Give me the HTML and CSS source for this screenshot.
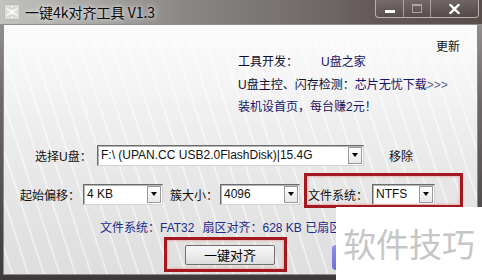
FILE: index.html
```html
<!DOCTYPE html>
<html lang="zh-CN">
<head>
<meta charset="utf-8">
<title>一键4k对齐工具 V1.3</title>
<link rel="stylesheet" href="styles.css">
</head>
<body>
<div class="window">
  <div class="titlebar">
    <svg class="app-icon" width="16" height="16" viewBox="0 0 16 16">
      <rect x="0.5" y="0.5" width="15" height="15" rx="1" fill="#d9dcd8" stroke="#b8bcb6"/>
      <g stroke="#ffffff" stroke-width="1.3" stroke-linecap="round">
        <line x1="8" y1="2.5" x2="8" y2="13.5"/>
        <line x1="3" y1="5" x2="13" y2="11"/>
        <line x1="3" y1="11" x2="13" y2="5"/>
      </g>
      <g stroke="#c2c6bf" stroke-width="0.8">
        <line x1="6" y1="3" x2="8" y2="5"/>
        <line x1="10" y1="3" x2="8" y2="5"/>
        <line x1="6" y1="13" x2="8" y2="11"/>
        <line x1="10" y1="13" x2="8" y2="11"/>
      </g>
    </svg>
    <span class="title">一键4k对齐工具 V1.3</span>
    <div class="controls">
      <span class="ctl ctl-min"><span class="min-bar"></span></span>
      <span class="ctl ctl-max"><span class="max-box"></span></span>
      <span class="ctl ctl-close">
        <svg width="11" height="10" viewBox="0 0 11 10">
          <path d="M1.5 1 L9.5 9 M9.5 1 L1.5 9" stroke="#ffffff" stroke-width="2.4" stroke-linecap="square"/>
        </svg>
      </span>
    </div>
  </div>
  <div class="frame">
    <div class="client">
      <div class="update">更新</div>
      <div class="info">
        <div class="info-line"><span class="info-key">工具开发：</span><span class="link">U盘之家</span></div>
        <div class="info-line"><span>U盘主控、闪存检测：</span><span class="link">芯片无忧下载</span><span class="more">&gt;&gt;&gt;</span></div>
        <div class="info-line"><span class="link">装机设首页，每台赚2元！</span></div>
      </div>
      <div class="row row-disk">
        <span class="label label-disk">选择U盘：</span>
        <div class="combo combo-disk"><span class="val">F:\ (UPAN.CC USB2.0FlashDisk)|15.4G</span><span class="arrow"><i></i></span></div>
        <span class="remove">移除</span>
      </div>
      <div class="row row-opts">
        <span class="label label-offset">起始偏移：</span>
        <div class="combo combo-small"><span class="val">4 KB</span><span class="arrow"><i></i></span></div>
        <span class="label label-cluster">簇大小：</span>
        <div class="combo combo-small"><span class="val">4096</span><span class="arrow"><i></i></span></div>
        <span class="label label-fs">文件系统：</span>
        <div class="combo combo-fs"><span class="val">NTFS</span><span class="arrow"><i></i></span></div>
      </div>
      <div class="status">文件系统：FAT32<span class="sep"></span>扇区对齐：628 KB 已扇区</div>
      <div class="row row-action">
        <div class="mark-btn"><button class="action">一键对齐</button></div>
        <div class="blue-btn"></div>
      </div>
      <div class="mark mark-fs"></div>
    </div>
  </div>
  <div class="watermark">软件技巧</div>
</div>
</body>
</html>
```
FILE: styles.css
```css
html, body {
  margin: 0;
  padding: 0;
}
body {
  width: 482px;
  height: 280px;
  overflow: hidden;
  font-family: "Liberation Sans", "Noto Sans CJK SC", sans-serif;
  font-size: 12px;
  color: #000;
}
.window {
  position: relative;
  width: 482px;
  height: 280px;
  display: flex;
  flex-direction: column;
  background: linear-gradient(180deg, #a09c9a 0%, #6f6968 35%, #3e3a3a 100%);
}
.titlebar {
  height: 24px;
  display: flex;
  align-items: center;
  background: linear-gradient(90deg, #c2c2c0 0%, #a9a8a6 18%, #8a8886 38%, #787272 58%, #625656 80%, #5a4e4c 100%);
}
.app-icon {
  margin-left: 4px;
  flex: none;
}
.title {
  margin-left: 5px;
  font-family: "Noto Sans CJK SC", sans-serif;
  font-size: 14px;
  line-height: 18px;
  color: #0a0a0a;
  text-shadow: 0 0 4px rgba(255, 255, 255, 0.85), 0 0 8px rgba(255, 255, 255, 0.6);
}
.controls {
  margin-left: auto;
  margin-right: 3px;
  align-self: flex-start;
  display: flex;
  height: 17px;
  border: 1px solid rgba(215, 210, 210, 0.75);
  border-top: none;
  border-radius: 0 0 4px 4px;
  overflow: hidden;
}
.ctl {
  display: flex;
  align-items: center;
  justify-content: center;
  height: 17px;
  background: linear-gradient(180deg, rgba(255,255,255,0.12), rgba(0,0,0,0.08));
}
.ctl + .ctl {
  border-left: 1px solid rgba(215, 210, 210, 0.6);
}
.ctl-min { width: 27px; }
.ctl-max { width: 26px; }
.ctl-close { width: 47px; }
.min-bar {
  display: block;
  width: 10px;
  height: 3px;
  margin-top: 5px;
  background: #fff;
  box-shadow: 0 0 1px rgba(0,0,0,0.6);
}
.max-box {
  display: block;
  width: 8px;
  height: 6px;
  border: 1px solid #a8a4a4;
  border-top-width: 2px;
}
.frame {
  flex: 1;
  display: flex;
  padding: 0 4px 5px 3px;
}
.client {
  position: relative;
  flex: 1;
  border: 1px solid #8c8c8c;
  padding-top: 16px;
  background:
    repeating-linear-gradient(72deg, rgba(255,255,255,0) 0 7px, rgba(255,255,255,0.45) 7px 9px, rgba(255,255,255,0) 9px 15px),
    linear-gradient(180deg, #fcfcfc 0%, #f5f5f5 22%, #eeeeee 40%, #e6e6e6 65%, #dedede 100%);
}
.update {
  height: 10px;
  line-height: 10px;
  text-align: right;
  padding-right: 17px;
  font-family: "Noto Sans CJK SC", sans-serif;
  color: #111;
}
.info {
  height: 68px;
  padding-left: 234px;
  color: #0c0c30;
}
.info-line {
  height: 22.5px;
  line-height: 22.5px;
  white-space: nowrap;
}
.info-key {
  display: inline-block;
  width: 83px;
}
.link {
  color: #14146a;
}
.more {
  color: #5f6296;
}
.row {
  display: flex;
  align-items: center;
  height: 22px;
}
.row-disk {
  margin-top: 25px;
  padding-left: 31px;
}
.row-opts {
  margin-top: 17px;
  padding-left: 16px;
}
.label {
  flex: none;
  color: #111;
  white-space: nowrap;
}
.label-disk { width: 62px; }
.label-offset { width: 63px; }
.label-cluster { width: 50px; margin-left: 7px; }
.label-fs { width: 64px; margin-left: 8px; }
.combo {
  flex: none;
  display: flex;
  box-sizing: border-box;
  height: 21px;
  background: #fff;
  border: 1px solid;
  border-color: #6c6c6c #d4d4d4 #d4d4d4 #6c6c6c;
  box-shadow: inset 1px 1px 0 #b4b4b4;
}
.combo .val {
  flex: 1;
  padding-left: 3px;
  line-height: 19px;
  white-space: nowrap;
  overflow: hidden;
  color: #111;
}
.combo .arrow {
  flex: none;
  width: 12px;
  margin: 1px;
  border: 1px solid #9a9a9a;
  background: linear-gradient(180deg, #fdfdfd, #e8e8e8);
  display: flex;
  align-items: center;
  justify-content: center;
}
.combo .arrow i {
  display: block;
  width: 0;
  height: 0;
  border-left: 3.5px solid transparent;
  border-right: 3.5px solid transparent;
  border-top: 4px solid #000;
}
.combo-disk { width: 267px; }
.combo-small { width: 80px; }
.combo-fs { width: 63px; }
.remove {
  margin-left: 25px;
  color: #111;
}
.status {
  margin-top: 15px;
  width: 332px;
  box-sizing: border-box;
  height: 16px;
  line-height: 16px;
  padding-left: 96px;
  color: #1e2a8c;
  white-space: nowrap;
  overflow: hidden;
}
.sep {
  display: inline-block;
  width: 8px;
}
.row-action {
  margin-top: 1px;
  height: 35px;
  align-items: flex-start;
}
.mark-btn {
  flex: none;
  margin-left: 160px;
  box-sizing: border-box;
  width: 123px;
  height: 35px;
  padding: 5px 9px 4px 18px;
  border: 3px solid #a3191f;
  box-shadow: inset 0 0 2px 1px rgba(240, 140, 140, 0.55);
}
.action {
  display: block;
  width: 90px;
  height: 20px;
  padding: 0;
  border: 1px solid #707070;
  border-radius: 2px;
  background: linear-gradient(180deg, #f8f8f8 0%, #ececec 50%, #dcdcdc 100%);
  font-family: "Noto Sans CJK SC", sans-serif;
  font-size: 13px;
  line-height: 18px;
  color: #000;
}
.blue-btn {
  flex: none;
  margin-left: 45px;
  margin-top: 8px;
  width: 60px;
  height: 25px;
  border-radius: 4px;
  background: linear-gradient(180deg, #8f8ff0, #6f70d8);
}
.mark {
  position: absolute;
  box-sizing: border-box;
  border: 3px solid #a3191f;
  box-shadow: inset 0 0 2px 1px rgba(240, 140, 140, 0.55);
}
.mark-fs {
  left: 300px;
  top: 148px;
  width: 159px;
  height: 35px;
}
.watermark {
  position: absolute;
  left: 336px;
  top: 207px;
  width: 146px;
  height: 73px;
  box-sizing: border-box;
  padding-left: 7px;
  background: #fff;
  font-family: "Noto Sans CJK SC", sans-serif;
  font-size: 33px;
  line-height: 72px;
  color: #c6c6c6;
  white-space: nowrap;
  overflow: hidden;
}
```
